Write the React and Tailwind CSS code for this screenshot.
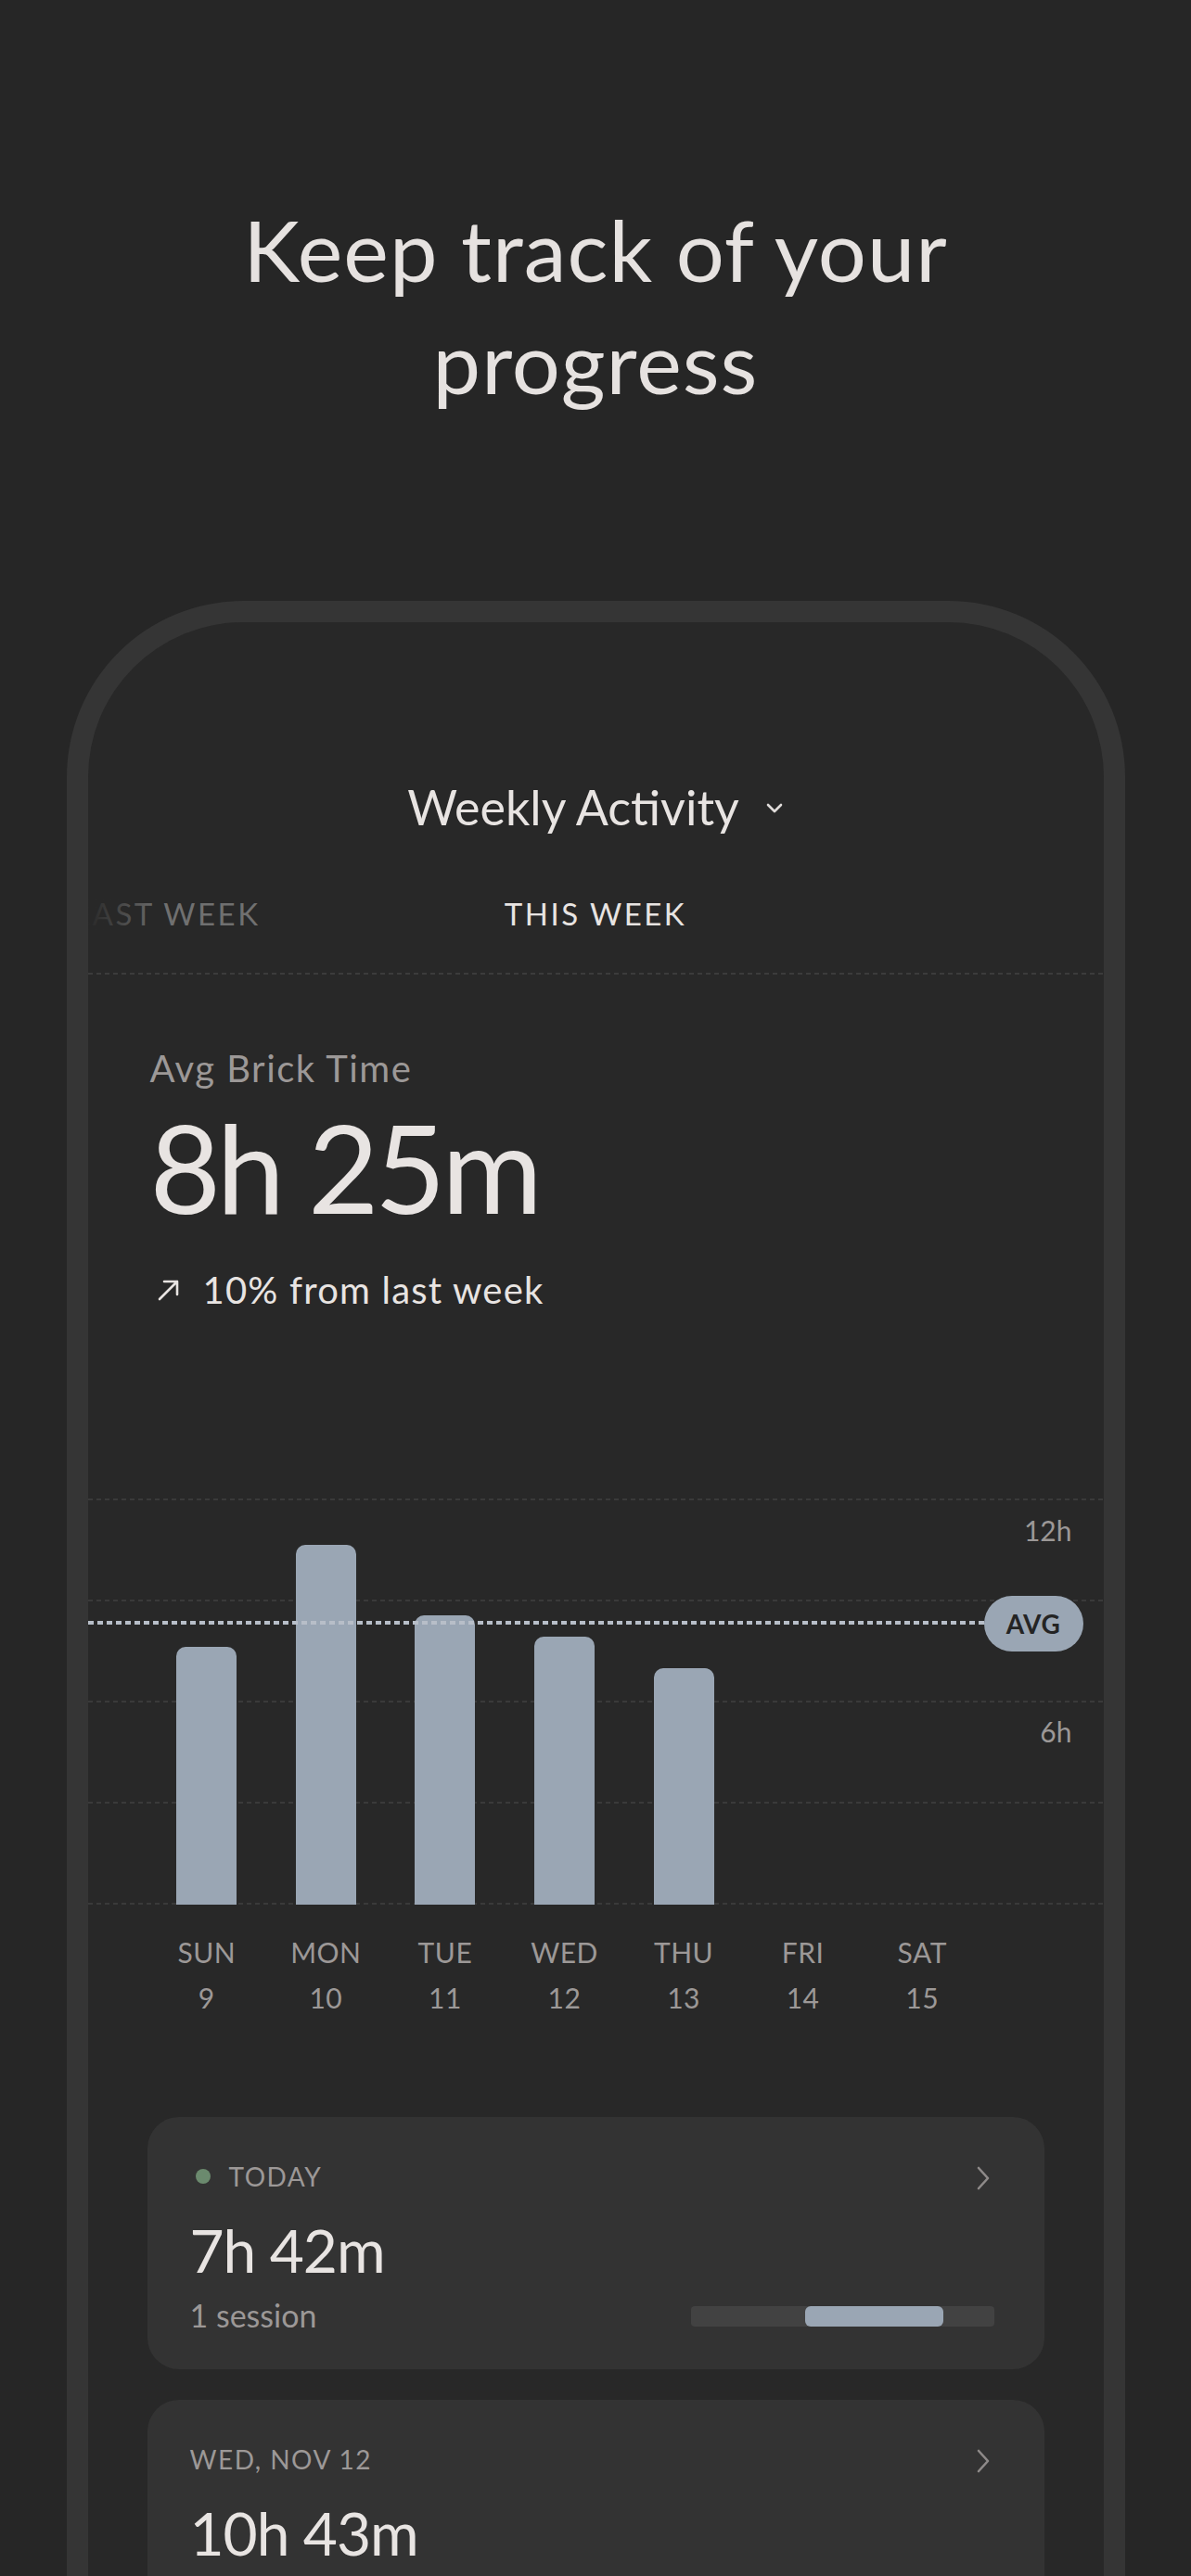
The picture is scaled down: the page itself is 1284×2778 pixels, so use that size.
import React from "react";

const bars = [
  { d: "SUN", n: "9", h: 278 },
  { d: "MON", n: "10", h: 388 },
  { d: "TUE", n: "11", h: 312 },
  { d: "WED", n: "12", h: 289 },
  { d: "THU", n: "13", h: 255 },
  { d: "FRI", n: "14", h: 0 },
  { d: "SAT", n: "15", h: 0 },
];

function ChevronRight() {
  return (
    <svg width="18" height="26" viewBox="0 0 18 26" fill="none">
      <path d="M4 2 L14 13 L4 24" stroke="#8e8a89" strokeWidth="2.6" strokeLinecap="round" strokeLinejoin="round" />
    </svg>
  );
}

function Card({ label, dot, time, sessions, fillLeft, fillWidth }) {
  return (
    <div className="mx-[64px] rounded-[34px] bg-[#333333] pl-[46px] pr-[54px] pt-[47px] pb-[38px]">
      <div className="flex items-center justify-between h-[34px]">
        <div className="flex items-center">
          {dot && <span className="ml-[6px] mr-[20px] w-4 h-4 rounded-full bg-[#6b8a6e]" />}
          <span className="text-[28px] leading-[34px] text-[#9c9897] tracking-[1.5px]">{label}</span>
        </div>
        <div className="mr-[3px] mt-[4px]"><ChevronRight /></div>
      </div>
      <div className="mt-[31px] text-[64px] leading-[64px] text-[#e8e4e2] tracking-[-1px]">{time}</div>
      <div className="mt-[18px] flex items-center justify-between h-[40px]">
        <span className="text-[34px] leading-[40px] text-[#9c9897]">{sessions}</span>
        <div className="relative w-[327px] h-[22px] rounded-[4px] bg-[#424242] mt-[2px]">
          <div className="absolute top-0 h-[22px] rounded-[6px] bg-[#9aa6b4]" style={{ left: fillLeft, width: fillWidth }} />
        </div>
      </div>
    </div>
  );
}

export default function App() {
  return (
    <div className="w-[1284px] h-[2778px] overflow-hidden bg-[#262626]" style={{ fontFamily: "Lato, 'Noto Sans', sans-serif" }}>
      <h1 className="pt-[208px] text-center text-[92px] leading-[121px] font-normal text-[#e6e2e0] tracking-[1px]">
        Keep track of your
        <br />
        progress
      </h1>

      <div className="mt-[198px] mx-auto w-[1141px] h-[2200px] border-[23px] border-b-0 border-[#353535] rounded-t-[190px] bg-[#282828] overflow-hidden">
        <div className="pt-[168px] flex items-center justify-center">
          <span className="text-[52px] leading-[62px] text-[#e8e4e2] tracking-[0px]">Weekly Activity</span>
          <svg className="ml-[28px] mt-[4px]" width="20" height="14" viewBox="0 0 20 14" fill="none">
            <path d="M3 3 L10 10 L17 3" stroke="#e0dcda" strokeWidth="2.6" strokeLinecap="round" strokeLinejoin="round" />
          </svg>
        </div>

        <div className="relative mt-[64px] h-[40px] overflow-hidden">
          <div className="absolute left-0 top-0 w-[186px] flex justify-end">
            <span className="whitespace-nowrap text-[33px] leading-[40px] text-[#707070] tracking-[2.5px]">LAST WEEK</span>
          </div>
          <div className="absolute left-0 top-0 w-[80px] h-[40px] bg-gradient-to-r from-[#282828] to-transparent" />
          <div className="text-center text-[33px] leading-[40px] text-[#e8e4e2] tracking-[2.5px]">THIS WEEK</div>
        </div>

        <div className="mt-[44px] h-[2px] bg-[repeating-linear-gradient(90deg,#3c3c3c_0_5px,transparent_5px_9px)]" />

        <div className="px-[67px]">
          <div className="mt-[77px] text-[40px] leading-[48px] text-[#9c9897] tracking-[1.5px]">Avg Brick Time</div>
          <div className="mt-[16px] text-[132px] leading-[132px] text-[#e8e4e2] tracking-[-4.5px]">8h 25m</div>
          <div className="mt-[43px] flex items-center h-[48px]">
            <svg width="26" height="26" viewBox="0 0 26 26" fill="none" className="ml-[7px]">
              <path d="M3 23 L22 4 M8 4 L22 4 L22 18" stroke="#e8e4e2" strokeWidth="2.6" strokeLinecap="round" strokeLinejoin="round" />
            </svg>
            <span className="ml-[24px] text-[40px] leading-[48px] text-[#e8e4e2] tracking-[1.2px]">10% from last week</span>
          </div>
        </div>

        <div className="relative mt-[201px] h-[438px]">
          <div className="absolute inset-0 flex flex-col justify-between">
            {[0, 1, 2, 3, 4].map((i) => (
              <div key={i} className="h-[2px] bg-[repeating-linear-gradient(90deg,#3a3a3a_0_5px,transparent_5px_9px)]" />
            ))}
          </div>
          <div className="absolute right-[34px] top-[16px] text-[30px] leading-[36px] text-[#9c9897]">12h</div>
          <div className="absolute right-[34px] top-[233px] text-[30px] leading-[36px] text-[#9c9897]">6h</div>

          <div className="relative ml-[64px] w-[900px] h-[438px] grid grid-cols-7 items-end">
            {bars.map((b) => (
              <div key={b.d} className="flex justify-center">
                {b.h > 0 && <div className="w-[65px] rounded-t-[10px] bg-[#9aa6b4]" style={{ height: b.h }} />}
              </div>
            ))}
          </div>

          <div className="absolute left-0 top-[132px] w-[966px] h-[4px] bg-[repeating-linear-gradient(90deg,#b7bec8_0_6px,transparent_6px_10px)]" />
          <div className="absolute left-[966px] top-[105px] w-[107px] h-[60px] rounded-full bg-[#9aa6b4] flex items-center justify-center">
            <span className="text-[28px] leading-[32px] font-bold text-[#242424] tracking-[0.5px]">AVG</span>
          </div>
        </div>

        <div className="mt-[27px] ml-[64px] w-[900px] grid grid-cols-7">
          {bars.map((b) => (
            <div key={b.d} className="flex flex-col items-center text-[30px] leading-[49px] text-[#9c9897] tracking-[0.5px]">
              <span>{b.d}</span>
              <span>{b.n}</span>
            </div>
          ))}
        </div>

        <div className="mt-[104px] flex flex-col gap-[33px]">
          <Card label="TODAY" dot time="7h 42m" sessions="1 session" fillLeft={123} fillWidth={149} />
          <Card label="WED, NOV 12" time="10h 43m" sessions="2 sessions" fillLeft={60} fillWidth={200} />
        </div>
      </div>
    </div>
  );
}
